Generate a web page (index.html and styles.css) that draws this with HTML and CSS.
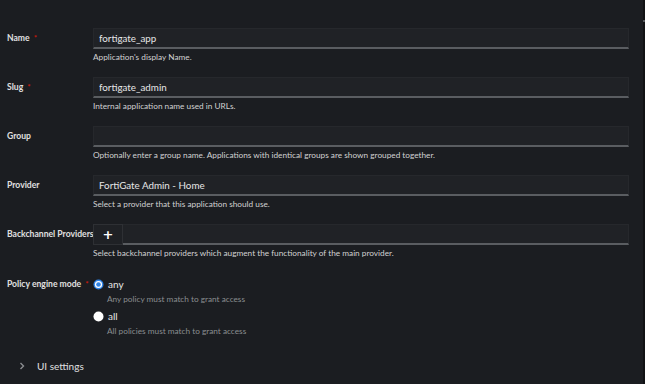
FILE: index.html
```html
<!DOCTYPE html>
<html lang="en">

<head>
    <meta charset="UTF-8">
    <meta name="viewport" content="width=device-width, initial-scale=1.0">
    <title>Update Application</title>
    <link rel="stylesheet" href="styles.css">
</head>

<body>
    <div class="page">
        <form class="app-form">
            <div class="row">
                <label class="label" for="name">Name <span class="req">*</span></label>
                <div class="field">
                    <input class="input" id="name" type="text" value="fortigate_app">
                    <p class="help">Application's display Name.</p>
                </div>
            </div>

            <div class="row">
                <label class="label" for="slug">Slug <span class="req">*</span></label>
                <div class="field">
                    <input class="input" id="slug" type="text" value="fortigate_admin">
                    <p class="help">Internal application name used in URLs.</p>
                </div>
            </div>

            <div class="row">
                <label class="label" for="group">Group</label>
                <div class="field">
                    <input class="input" id="group" type="text" value="">
                    <p class="help">Optionally enter a group name. Applications with identical groups are shown grouped together.</p>
                </div>
            </div>

            <div class="row">
                <label class="label" for="provider">Provider</label>
                <div class="field">
                    <input class="input" id="provider" type="text" value="FortiGate Admin - Home">
                    <p class="help">Select a provider that this application should use.</p>
                </div>
            </div>

            <div class="row">
                <label class="label">Backchannel Providers</label>
                <div class="field">
                    <div class="chips">
                        <button type="button" class="add-btn">+</button>
                        <div class="chip-area"></div>
                    </div>
                    <p class="help">Select backchannel providers which augment the functionality of the main provider.</p>
                </div>
            </div>

            <div class="row row-radio">
                <label class="label label-radio">Policy engine mode <span class="req">*</span></label>
                <div class="field">
                    <div class="radio">
                        <svg class="dot" width="11" height="11" viewBox="0 0 11 11">
                            <circle cx="5.5" cy="5.5" r="5" fill="#2f84e8"/>
                            <circle cx="5.5" cy="5.5" r="3.6" fill="#fff"/>
                            <circle cx="5.5" cy="5.5" r="2.3" fill="#2f84e8"/>
                        </svg>
                        <span class="radio-label">any</span>
                    </div>
                    <p class="radio-help">Any policy must match to grant access</p>
                    <div class="radio radio-next">
                        <svg class="dot" width="11" height="11" viewBox="0 0 11 11">
                            <circle cx="5.5" cy="5.5" r="5" fill="#fff"/>
                        </svg>
                        <span class="radio-label">all</span>
                    </div>
                    <p class="radio-help">All policies must match to grant access</p>
                </div>
            </div>

            <div class="expand">
                <svg class="chevron" width="6" height="8" viewBox="0 0 6 8">
                    <path d="M1.5 1 L4.5 4 L1.5 7" fill="none" stroke="#8a8d90" stroke-width="1.4"/>
                </svg>
                <span class="expand-text">UI settings</span>
            </div>
        </form>
        <div class="scroll"><div class="thumb"></div></div>
    </div>
</body>

</html>
```

FILE: styles.css
```css
body {
    margin: 0;
    padding: 0;
    background-color: #1b1d21;
    font-family: Lato, "Liberation Sans", sans-serif;
    color: #e0e0e0;
}

.page {
    display: flex;
    height: 384px;
    overflow: hidden;
}

.app-form {
    flex: 1;
    padding: 28px 14px 0 7px;
}

.scroll {
    width: 2px;
    background-color: #111214;
}

.thumb {
    height: 2px;
    margin-top: 20px;
    background-color: #55585c;
}

.row {
    display: grid;
    grid-template-columns: 86px 1fr;
    align-items: start;
    margin-bottom: 14px;
}

.label {
    font-size: 8.6px;
    font-weight: bold;
    line-height: 21px;
    white-space: nowrap;
}

.req {
    margin-left: 2px;
    color: #c9190b;
    font-size: 8px;
}

.input {
    display: block;
    width: 100%;
    height: 21px;
    box-sizing: border-box;
    margin: 0;
    padding: 0 5px;
    background-color: #202226;
    border: 1px solid #26282c;
    border-bottom: 2px solid #5a5d61;
    color: #e6e6e6;
    font-family: Lato, "Liberation Sans", sans-serif;
    font-size: 9.8px;
    outline: none;
}

.help {
    margin: 3px 0 0;
    font-size: 8.25px;
    line-height: 11px;
    color: #d2d2d2;
}

.chips {
    display: flex;
    height: 21px;
}

.add-btn {
    width: 30px;
    height: 21px;
    margin: 0;
    padding: 0;
    background-color: #1f2125;
    border: 1px solid #2e3034;
    color: #fff;
    font-family: "DejaVu Sans", sans-serif;
    font-size: 13px;
    font-weight: bold;
    line-height: 19px;
}

.chip-area {
    flex: 1;
    box-sizing: border-box;
    background-color: #202226;
    border-top: 1px solid #26282c;
    border-right: 1px solid #26282c;
    border-bottom: 2px solid #5a5d61;
}

.row-radio {
    margin-top: 18px;
}

.label-radio {
    line-height: 14px;
}

.radio {
    display: flex;
    align-items: center;
    height: 14px;
}

.radio-next {
    margin-top: 4px;
}

.radio-label {
    margin-left: 4px;
    font-size: 10px;
    color: #e6e6e6;
}

.radio-help {
    margin: 2px 0 0 14px;
    font-size: 8.25px;
    line-height: 12px;
    color: #8a8d90;
}

.expand {
    display: flex;
    align-items: center;
    margin-top: 22px;
    height: 14px;
}

.chevron {
    margin: 0 12px 0 12px;
}

.expand-text {
    font-size: 10px;
    color: #e0e0e0;
}
```
